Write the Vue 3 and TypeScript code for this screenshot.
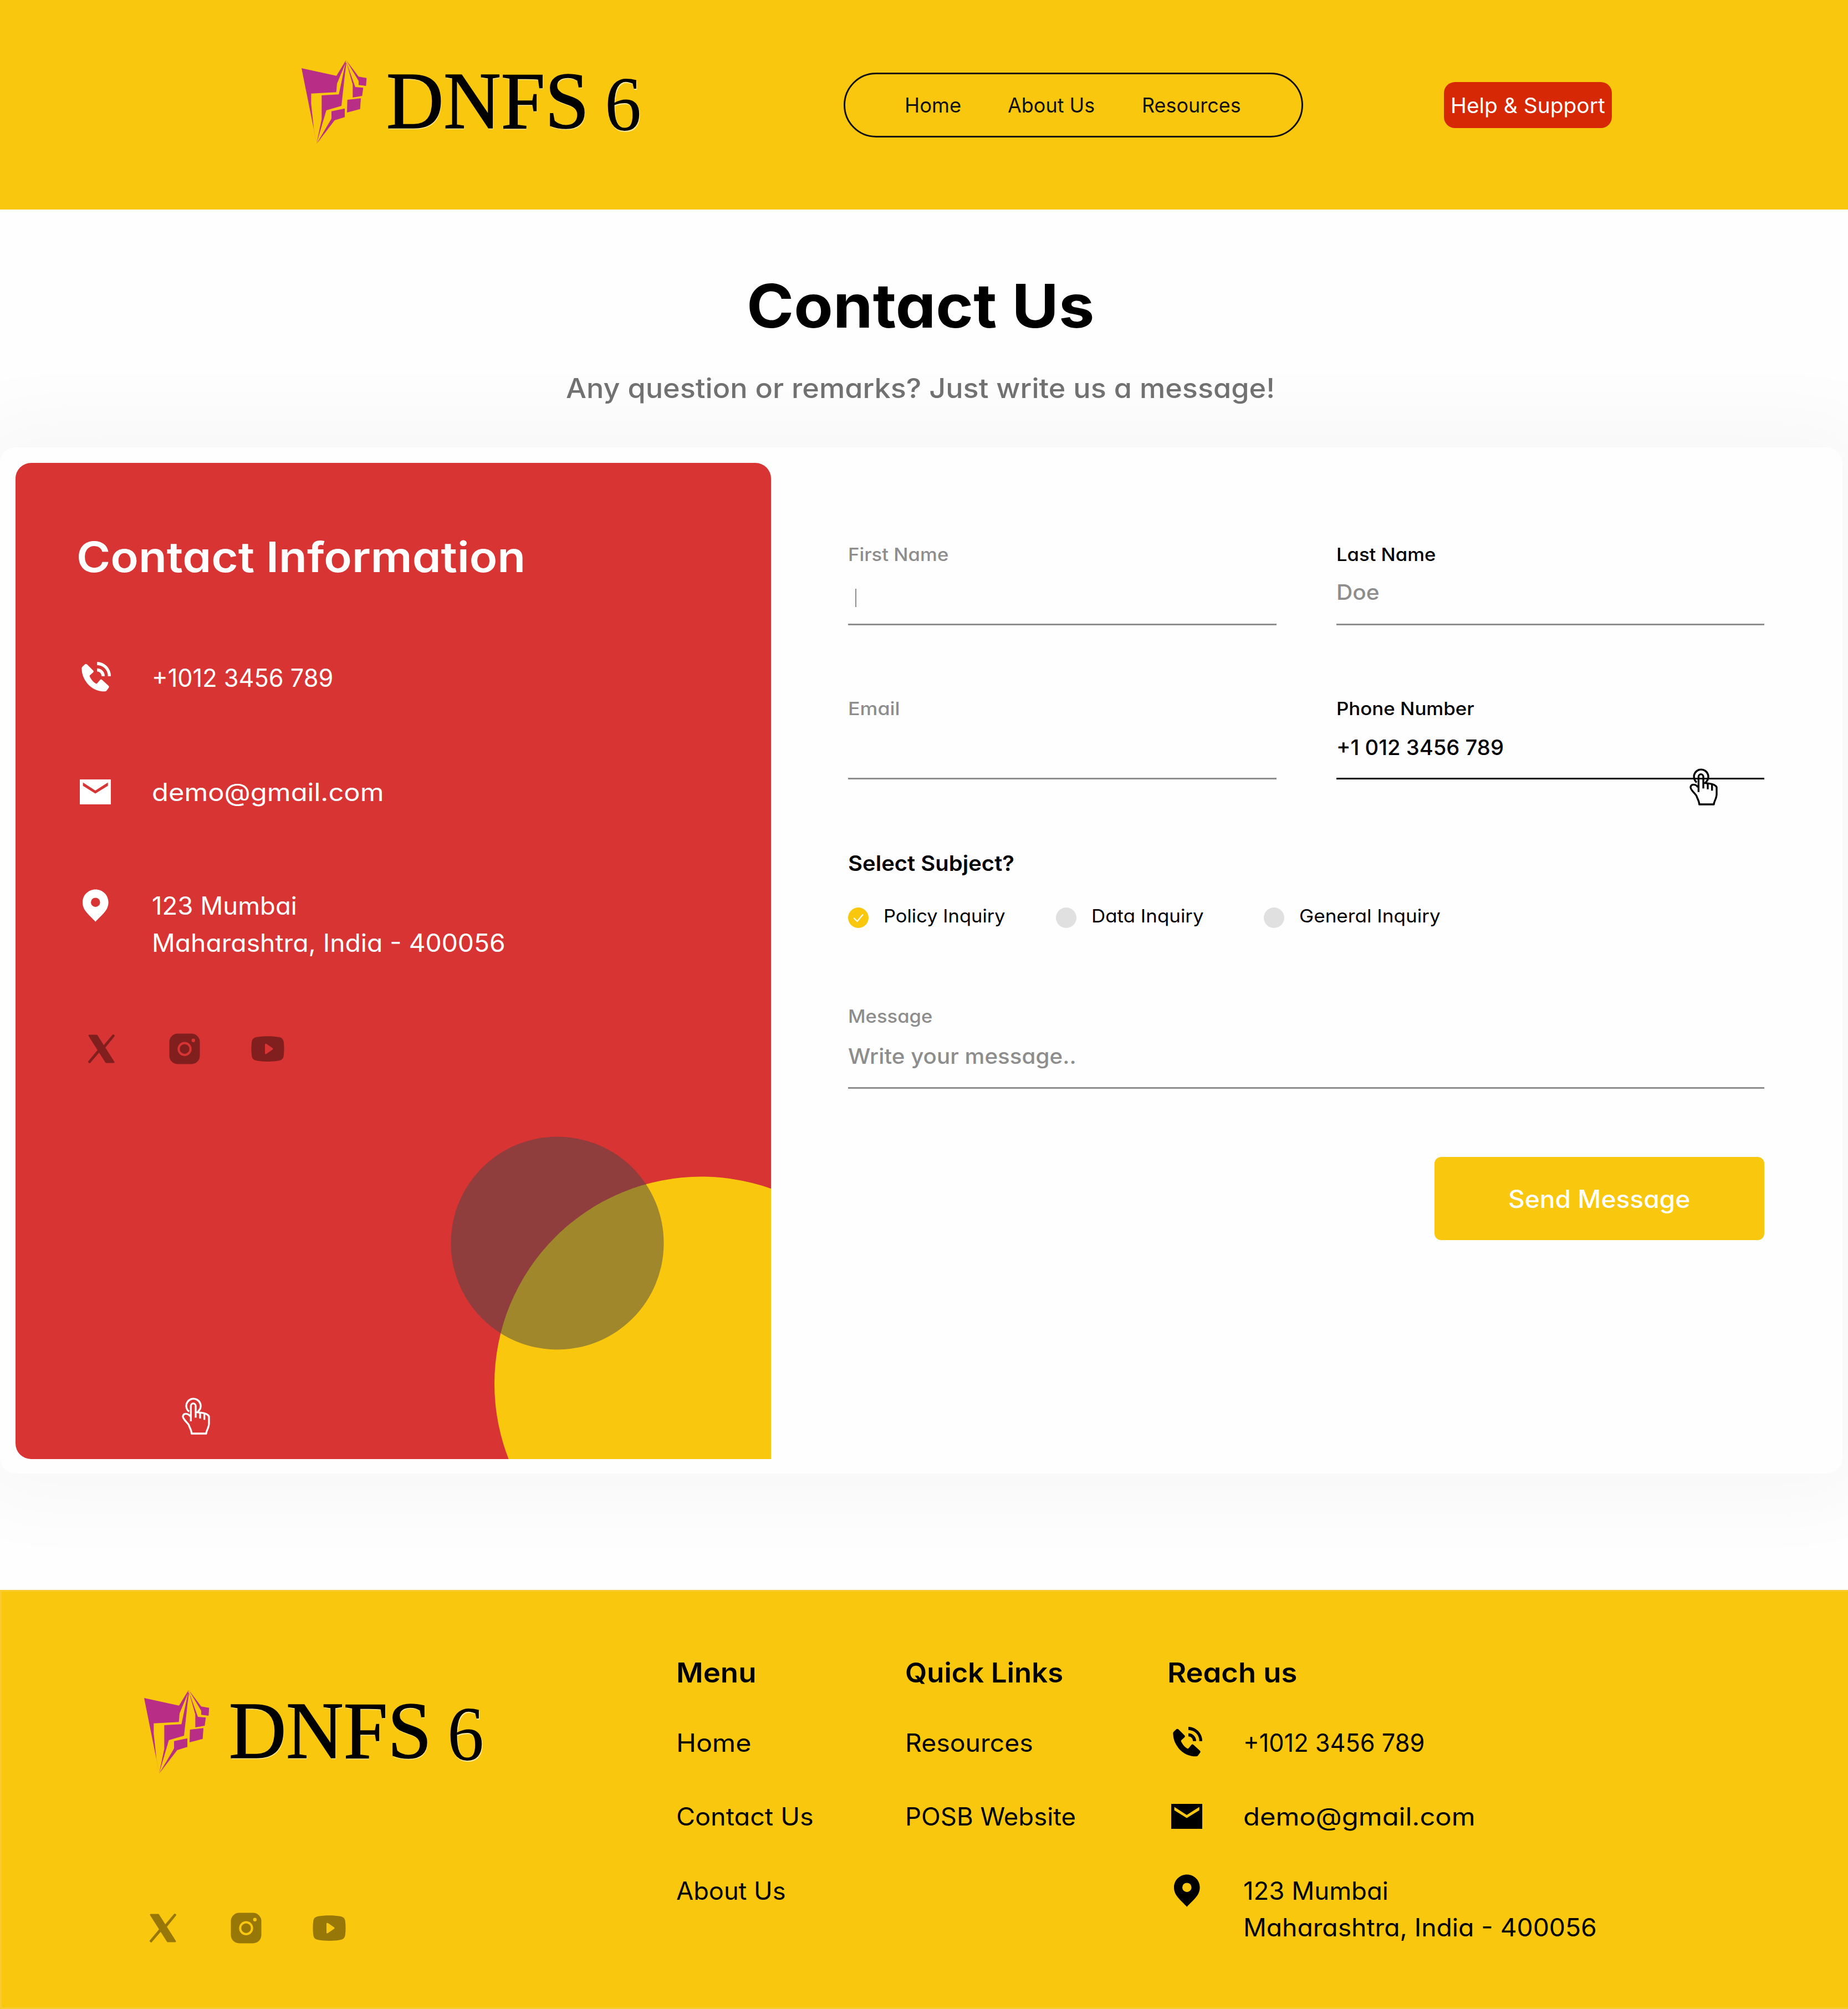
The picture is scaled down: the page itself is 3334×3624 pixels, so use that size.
<script setup lang="ts">
import type { Directive } from 'vue'

interface FooterLink { label: string; width: number }
interface ContactRow { icon: string; lines: { text: string; width: number }[] }

const navLinks: FooterLink[] = [
  { label: 'Home', width: 98 },
  { label: 'About Us', width: 156 },
  { label: 'Resources', width: 174.5 },
]

const contactRows: ContactRow[] = [
  { icon: 'phone', lines: [{ text: '+1012 3456 789', width: 321 }] },
  { icon: 'mail', lines: [{ text: 'demo@gmail.com', width: 413 }] },
  {
    icon: 'pin',
    lines: [
      { text: '123 Mumbai', width: 258 },
      { text: 'Maharashtra, India - 400056', width: 632 },
    ],
  },
]

const subjects = [
  { label: 'Policy Inquiry', width: 217, checked: true },
  { label: 'Data Inquiry', width: 200, checked: false },
  { label: 'General Inquiry', width: 253, checked: false },
]

const menuLinks: FooterLink[] = [
  { label: 'Home', width: 130 },
  { label: 'Contact Us', width: 244 },
  { label: 'About Us', width: 195 },
]

const quickLinks: FooterLink[] = [
  { label: 'Resources', width: 226 },
  { label: 'POSB Website', width: 303 },
]

const socials = ['x', 'instagram', 'youtube']

// Widens a line of text so that its glyphs span the given width in pixels.
const vFit: Directive<HTMLElement, number> = {
  mounted(el, { value }) {
    const text = (el.textContent ?? '').trim()
    const style = getComputedStyle(el)
    const ctx = document.createElement('canvas').getContext('2d')
    if (!ctx || !text) return
    ctx.font = `${style.fontWeight} ${style.fontSize} ${style.fontFamily}`
    const m = ctx.measureText(text)
    const bearings = -m.actualBoundingBoxLeft + (m.width - m.actualBoundingBoxRight)
    const natural = el.getBoundingClientRect().width
    const scale = value / (natural - bearings)
    el.style.transform = `scaleX(${scale.toFixed(4)})`
    el.style.marginRight = `${(natural * (scale - 1)).toFixed(2)}px`
  },
}
</script>

<template>
  <div class="page">
    <svg class="defs" aria-hidden="true">
      <symbol id="mark" viewBox="0 0 420 510">
        <g fill="#b82d86">
          <path d="M27 69L216 110L260 38L268 26L264 44L219 152L215 199L79 206L79 262L94 400L109 477Z" />
          <path d="M265 40L229 211L136 216L136 344L108 478L161 297L243 273L262 100L270 40Z" />
          <path d="M189 302L261 287L261 334L206 351L109 478L189 342Z" />
          <path d="M275 240L348 232L344 290L273 309Z" />
          <path d="M269 34L318 171L361 175L355 219L304 228L304 158Z" />
          <path d="M269 26L336 115L379 122L376 165L336 160L336 138Z" />
        </g>
      </symbol>
      <symbol id="phone" viewBox="0 15 210 210">
        <path d="M22 62Q22 56 28 51L41 39Q46 36 52 41L85 74Q89 79 84 84L66 100Q63 104 68 111Q82 136 100 145Q104 146 107 142L122 124Q127 119 132 124L168 157Q172 161 169 166L156 184Q152 187 146 187Q90 187 52 143Q22 105 22 62Z" />
        <path d="M105 27A75 77 0 0 1 180 104H164A59 59 0 0 0 105 44Z" />
        <path d="M105 62A41 42 0 0 1 147 104H130A25 25 0 0 0 105 79Z" />
      </symbol>
      <symbol id="mail" viewBox="0 0 70 70">
        <path fill-rule="evenodd" d="M4 10H60V55H4ZM9.6 15.6V21.5L32 35.5L54.7 21.5V15.6L32 30Z" />
      </symbol>
      <symbol id="pin" viewBox="0 0 70 70">
        <path fill-rule="evenodd" d="M32.3 3.5C19.4 3.5 9 13.7 9 26.6C9 42 21 49 32.3 61.8C43.6 49 55.6 42 55.6 26.6C55.6 13.7 45.2 3.5 32.3 3.5ZM32.3 18.4A8.3 8.3 0 1 1 32.3 35A8.3 8.3 0 1 1 32.3 18.4Z" />
      </symbol>
      <symbol id="x" viewBox="0 0 60 60">
        <g fill="currentColor" stroke="currentColor" stroke-width="3" stroke-linejoin="round">
          <path d="M8 6H21.5L52 54H38.500Z" />
          <path d="M51.200 5.500L33 27L34.500 28.500L52.500 6.200Z" />
          <path d="M26 31L7.300 53.400L8.600 54.400L27.500 32.500Z" />
        </g>
      </symbol>
      <symbol id="instagram" viewBox="0 0 60 60">
        <path fill-rule="evenodd" d="M17.5 2.5H42.5A15 15 0 0 1 57.5 17.5V42.5A15 15 0 0 1 42.5 57.5H17.5A15 15 0 0 1 2.5 42.5V17.5A15 15 0 0 1 17.5 2.5ZM30 17.5A12.7 12.7 0 1 0 30 42.9A12.7 12.7 0 1 0 30 17.5ZM30 21.5A8.7 8.7 0 1 1 30 38.9A8.7 8.7 0 1 1 30 21.5ZM45.8 11.5A3.2 3.2 0 1 0 45.8 17.9A3.2 3.2 0 1 0 45.8 11.5Z" />
      </symbol>
      <symbol id="youtube" viewBox="0 0 60 60">
        <path fill-rule="evenodd" d="M10 8.7C20 6.6 40 6.6 50 8.7C55.5 9.8 58 12.5 58.7 17C59.8 25 59.8 35 58.7 43C58 47.5 55.5 50.2 50 51.3C40 53.4 20 53.4 10 51.3C4.5 50.2 2 47.5 1.3 43C.2 35 .2 25 1.3 17C2 12.5 4.5 9.8 10 8.7ZM25 22.2V38C25 39.6 26.6 40 27.7 39.1L38.6 31.6C39.9 30.6 39.9 29.6 38.6 28.6L27.7 21.1C26.6 20.2 25 20.6 25 22.2Z" />
      </symbol>
      <symbol id="tap" viewBox="82 119 159 207">
        <g fill="none" stroke="currentColor" stroke-width="10" stroke-linejoin="round">
          <path d="M124 198A39 39 0 1 1 183 185L172 200" />
          <path d="M134 250V168A13 14 0 0 1 160 168V231" />
          <path d="M131 224C119 206 94 205 91 223C89 239 117 258 123 271C129 289 138 300 138 317H217C217 301 232 286 232 262V224Q224 208 190 204L163 201" />
          <path d="M184 205V235M207 209V243" />
        </g>
      </symbol>
    </svg>

    <header class="header">
      <div class="logo">
        <svg class="mark"><use href="#mark" /></svg>
        <span class="word"><span v-fit="354" class="fit">DNFS</span></span>
        <span class="six"><span v-fit="58" class="fit">6</span></span>
      </div>
      <nav class="nav">
        <a v-for="l in navLinks" :key="l.label" v-fit="l.width" class="fit">{{ l.label }}</a>
      </nav>
      <button class="help"><span v-fit="275" class="fit">Help &amp; Support</span></button>
    </header>

    <section class="hero">
      <h1><span v-fit="619" class="fit">Contact Us</span></h1>
      <p><span v-fit="1275" class="fit">Any question or remarks? Just write us a message!</span></p>
    </section>

    <main class="card">
      <section class="info">
        <svg class="circles" viewBox="0 0 1363 1796">
          <circle cx="1237.5" cy="1661" r="373.5" fill="#fac70f" />
          <circle cx="977.5" cy="1407.5" r="192" fill="#484848" fill-opacity=".5" />
        </svg>
        <h2><span v-fit="802" class="fit">Contact Information</span></h2>
        <ul class="contact">
          <li v-for="r in contactRows" :key="r.icon">
            <svg class="icon"><use :href="'#' + r.icon" /></svg>
            <div>
              <div v-for="l in r.lines" :key="l.text" class="line"><span v-fit="l.width" class="fit">{{ l.text }}</span></div>
            </div>
          </li>
        </ul>
        <div class="socials">
          <svg v-for="s in socials" :key="s"><use :href="'#' + s" /></svg>
        </div>
        <svg class="tap tap-info"><use href="#tap" /></svg>
      </section>

      <form class="form">
        <div class="row">
          <div class="field">
            <label><span v-fit="178" class="fit">First Name</span></label>
            <i class="caret"></i>
          </div>
          <div class="field">
            <label class="dark"><span v-fit="176" class="fit">Last Name</span></label>
            <div class="value"><span v-fit="73" class="fit">Doe</span></div>
          </div>
        </div>
        <div class="row second">
          <div class="field">
            <label><span v-fit="89" class="fit">Email</span></label>
          </div>
          <div class="field active">
            <label class="dark"><span v-fit="246" class="fit">Phone Number</span></label>
            <div class="value dark"><span v-fit="297" class="fit">+1 012 3456 789</span></div>
            <svg class="tap tap-field"><use href="#tap" /></svg>
          </div>
        </div>
        <h3><span v-fit="298" class="fit">Select Subject?</span></h3>
        <div class="radios">
          <div v-for="s in subjects" :key="s.label" class="radio">
            <span class="dot" :class="{ on: s.checked }">
              <svg v-if="s.checked" viewBox="0 0 37 37"><path d="M11 19.5L16.5 25L26.5 13" /></svg>
            </span>
            <span v-fit="s.width" class="fit">{{ s.label }}</span>
          </div>
        </div>
        <div class="field message">
          <label><span v-fit="149" class="fit">Message</span></label>
          <div class="value"><span v-fit="409" class="fit">Write your message..</span></div>
        </div>
        <button type="button" class="send"><span v-fit="325" class="fit">Send Message</span></button>
      </form>
    </main>

    <footer class="footer">
      <div class="brand">
        <div class="logo">
          <svg class="mark"><use href="#mark" /></svg>
          <span class="word"><span v-fit="354" class="fit">DNFS</span></span>
          <span class="six"><span v-fit="58" class="fit">6</span></span>
        </div>
        <div class="socials">
          <svg v-for="s in socials" :key="s"><use :href="'#' + s" /></svg>
        </div>
      </div>
      <div class="col menu">
        <h4><span v-fit="138" class="fit">Menu</span></h4>
        <div v-for="l in menuLinks" :key="l.label" class="line"><span v-fit="l.width" class="fit">{{ l.label }}</span></div>
      </div>
      <div class="col quick">
        <h4><span v-fit="281" class="fit">Quick Links</span></h4>
        <div v-for="l in quickLinks" :key="l.label" class="line"><span v-fit="l.width" class="fit">{{ l.label }}</span></div>
      </div>
      <div class="col reach">
        <h4><span v-fit="229" class="fit">Reach us</span></h4>
        <ul class="contact">
          <li v-for="r in contactRows" :key="r.icon">
            <svg class="icon"><use :href="'#' + r.icon" /></svg>
            <div>
              <div v-for="l in r.lines" :key="l.text" class="line"><span v-fit="l.width" class="fit">{{ l.text }}</span></div>
            </div>
          </li>
        </ul>
      </div>
    </footer>
  </div>
</template>

<style>
body { background: #fefefe; }
</style>

<style scoped>
.page {
  width: 3334px;
  height: 3624px;
  overflow: hidden;
  background: #fefefe;
  color: #000;
  font-family: Inter, "Open Sans", sans-serif;
  font-feature-settings: "cv11" 1;
}
.page * { box-sizing: border-box; }
h1, h2, h3, h4, p, ul { margin: 0; padding: 0; }
button { border: 0; padding: 0; font-family: inherit; font-feature-settings: inherit; }
svg { display: block; fill: currentColor; overflow: visible; }
.defs { position: absolute; width: 0; height: 0; }
.fit { display: inline-block; white-space: nowrap; transform-origin: 0 50%; }

.header {
  position: relative;
  z-index: 1;
  display: flex;
  align-items: flex-start;
  height: 378px;
  padding-left: 535px;
  background: #fac70f;
}
.logo {
  display: flex;
  height: 170px;
  font-family: "Liberation Serif", serif;
  text-shadow: 1px 2px 1px rgba(255, 246, 200, .85);
}
.header .logo { margin-top: 100px; width: 987px; }
.mark { width: 140px; height: 170px; }
.word {
  width: 380px;
  margin: 2px 0 0 22px;
  font-size: 146px;
  line-height: 160px;
  -webkit-text-stroke: 1.5px #000;
}
.six { margin: 8px 0 0 14px; font-size: 139px; line-height: 160px; }
.nav {
  display: flex;
  align-items: center;
  gap: 84.5px;
  width: 829px;
  height: 117px;
  margin-top: 131px;
  padding: 1px 0 0 106.5px;
  border: 3px solid #111;
  border-radius: 59px;
  color: #111;
  font-size: 36.5px;
  font-feature-settings: normal;
}
.help {
  width: 303px;
  height: 83px;
  margin: 148px 0 0 253.5px;
  border-radius: 20px;
  background: #d62804;
  color: #fff;
  font-size: 38.5px;
  font-feature-settings: normal;
}

.hero { width: 3321px; height: 429px; padding-top: 113px; text-align: center; }
.hero h1 { font-size: 109px; line-height: 120px; font-weight: 700; }
.hero p { position: relative; z-index: 1; margin-top: 60px; font-size: 49px; line-height: 60px; font-weight: 500; color: #717171; }

.card {
  display: flex;
  width: 3324px;
  height: 1851px;
  padding: 28px 0 0 28px;
  border-radius: 28px;
  background: #fefefe;
  box-shadow: 0 0 139px 60px rgba(50, 50, 10, .026);
}
.info {
  position: relative;
  width: 1363px;
  height: 1797px;
  padding: 124px 0 0 112px;
  overflow: hidden;
  border-radius: 28px 28px 0 28px;
  background: #d73433;
  color: #fff;
}
.circles { position: absolute; left: 0; top: 0; width: 1363px; height: 1796px; }
.info h2 { margin-left: -2.5px; font-size: 76px; line-height: 90px; font-weight: 600; }
.contact { list-style: none; }
.info .contact { display: flex; flex-direction: column; gap: 139px; margin-top: 141px; }
.contact li { display: flex; gap: 64px; }
.icon { width: 70px; height: 70px; margin-bottom: -4px; }
.line { font-size: 44.5px; line-height: 66.5px; height: 66.5px; }
.socials { display: flex; gap: 90px; color: #967708; }
.socials svg { width: 60px; height: 60px; }
.info .socials { margin: 127.5px 0 0 12.5px; color: #811f1e; }
.tap { position: absolute; width: 53px; height: 69px; }
.tap-info { left: 299px; top: 1685px; }

.form { width: 1653px; margin: 143px 0 0 139px; }
.row { display: flex; justify-content: space-between; }
.row.second { margin-top: 127.5px; }
.field { position: relative; width: 772.5px; height: 150px; border-bottom: 3px solid #8d8d8d; color: #8d8d8d; }
.field label { display: block; font-size: 32.5px; line-height: 46px; font-weight: 500; }
.field .value { margin-top: 18px; font-size: 38px; line-height: 52px; font-weight: 500; }
.second .value { margin-top: 20.5px; }
.field .dark { color: #000; }
.field.active { border-color: #000; color: #000; }
.caret { display: block; width: 2px; height: 33px; margin: 38px 0 0 13px; background: #8d8d8d; }
.tap-field { left: 636px; top: 129px; }
.form h3 { margin-top: 124.5px; font-size: 38.5px; line-height: 54px; font-weight: 600; }
.radios { display: flex; margin-top: 45px; font-size: 33px; line-height: 46px; }
.radio { display: flex; width: 375px; }
.dot { width: 37px; height: 37px; margin: 8px 26.5px 0 0; border-radius: 50%; background: #e0e0e0; }
.dot.on { background: #fac70f; }
.dot svg { fill: none; stroke: #fff; stroke-width: 2.2px; stroke-linecap: round; stroke-linejoin: round; }
.field.message { width: 1653px; height: 153px; margin-top: 136px; }
.message .value { margin-top: 22px; }
.send {
  display: block;
  width: 595px;
  height: 150px;
  margin: 123px 0 0 auto;
  padding-top: 2px;
  border-radius: 12px;
  background: #fac70f;
  color: #fff;
  font-size: 44.5px;
  font-weight: 500;
}

.footer {
  position: relative;
  display: flex;
  height: 756px;
  margin-top: 210px;
  padding-top: 113px;
  border: 3px solid #facb2e;
  border-right-width: 0;
  background: #fac70f;
}
.brand { width: 969.5px; margin-left: 247.5px; padding-top: 56px; }
.brand .socials { margin: 238px 0 0 13.5px; }
.col h4 { margin-bottom: 59.5px; font-size: 49px; line-height: 67px; font-weight: 600; }
.menu, .quick { width: 413px; }
.menu .line, .quick .line { margin-bottom: 67px; }
.quick { width: 472.5px; }
.reach .contact { display: flex; flex-direction: column; gap: 67px; margin-left: 3px; }
</style>
